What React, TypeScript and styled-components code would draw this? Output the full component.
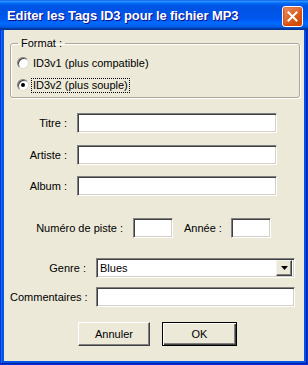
import React, { useState } from "react";
import styled, { createGlobalStyle } from "styled-components";

const GlobalStyle = createGlobalStyle`
  html, body {
    margin: 0;
    padding: 0;
    background: #ffffff;
  }
  body {
    font-family: "Liberation Sans", Arial, sans-serif;
    font-size: 11px;
    color: #000;
  }
`;

const FACE = "#ECE9D8";

const Window = styled.div`
  width: 308px;
  height: 365px;
  box-sizing: border-box;
  display: flex;
  flex-direction: column;
  background: #0054e3;
  border: 1px solid #0831d9;
  border-top: none;
  padding: 0 3px 3px 3px;
  box-shadow: inset -1px -1px #001ea0, inset 1px 0 #166aee;
`;

const TitleBar = styled.div`
  height: 30px;
  flex-shrink: 0;
  margin: 0 -4px;
  display: flex;
  align-items: center;
  justify-content: space-between;
  padding: 0 5px 0 7px;
  background: linear-gradient(
    #0058ee 0%,
    #3593ff 4%,
    #288eff 6%,
    #127dff 8%,
    #036ffc 10%,
    #0262ee 14%,
    #0057e5 20%,
    #0054e3 24%,
    #0055eb 56%,
    #005bf5 66%,
    #026afe 76%,
    #0062ef 86%,
    #0052d6 92%,
    #0040ab 94%,
    #003092 100%
  );
`;

const Title = styled.span`
  color: #fff;
  font-family: "Liberation Sans", Arial, sans-serif;
  font-weight: bold;
  font-size: 13px;
  letter-spacing: -0.1px;
  text-shadow: 1px 1px #0f1089;
  padding-top: 1px;
`;

const CloseButton = styled.button`
  width: 21px;
  height: 21px;
  padding: 0;
  margin-top: 2px;
  border: 1px solid #fff;
  border-radius: 3px;
  display: flex;
  align-items: center;
  justify-content: center;
  background: radial-gradient(
    circle at 90% 90%,
    #cc4600 0%,
    #dc6527 55%,
    #e27a4a 70%,
    #e8956e 100%
  );
  box-shadow: inset 0 -1px 2px 1px #da4600;
`;

const Body = styled.div`
  flex: 1;
  background: ${FACE};
  display: flex;
  flex-direction: column;
  padding: 7px 0 0 6px;
`;

const GroupBox = styled.fieldset`
  width: 290px;
  box-sizing: border-box;
  margin: 0;
  padding: 7px 0 5px 6px;
  border: 1px solid #aca899;
  border-radius: 3px;
  box-shadow: inset 1px 1px #fff, 1px 1px #fff;
  display: flex;
  flex-direction: column;
  gap: 8px;
`;

const Legend = styled.legend`
  padding: 0 3px;
  margin-left: 1px;
  color: #000;
`;

const RadioRow = styled.label`
  display: flex;
  align-items: center;
  gap: 3px;
  height: 14px;
`;

const RadioCircle = styled.span<{ checked: boolean }>`
  width: 12px;
  height: 12px;
  box-sizing: border-box;
  border-radius: 50%;
  border: 1px solid;
  border-color: #808080 #e0ddd0 #e0ddd0 #808080;
  background: #fff;
  box-shadow: inset 1px 1px #404040;
  display: flex;
  align-items: center;
  justify-content: center;
  &::after {
    content: "";
    width: 4px;
    height: 4px;
    border-radius: 50%;
    background: ${(p) => (p.checked ? "#000" : "transparent")};
  }
`;

const RadioText = styled.span<{ focused: boolean }>`
  padding: 0 1px;
  outline: ${(p) => (p.focused ? "1px dotted #000" : "none")};
  line-height: 13px;
`;

const Row = styled.div<{ top: number }>`
  display: flex;
  align-items: center;
  margin-top: ${(p) => p.top}px;
`;

const Label = styled.span<{ width: number }>`
  width: ${(p) => p.width}px;
  text-align: right;
  white-space: nowrap;
  margin-right: 10px;
`;

const InlineLabel = styled.span`
  margin: 0 9px 0 11px;
  white-space: nowrap;
`;

const TextBox = styled.input<{ w: number }>`
  width: ${(p) => p.w}px;
  height: 20px;
  box-sizing: border-box;
  margin: 0;
  padding: 1px 3px;
  font-family: "Liberation Sans", Arial, sans-serif;
  font-size: 11px;
  background: #fff;
  border: 1px solid;
  border-color: #808080 #ffffff #ffffff #808080;
  box-shadow: inset 1px 1px #404040, inset -1px -1px #d4d0c8;
  outline: none;
`;

const Combo = styled.div`
  width: 199px;
  height: 20px;
  box-sizing: border-box;
  display: flex;
  align-items: center;
  background: #fff;
  border: 1px solid;
  border-color: #808080 #ffffff #ffffff #808080;
  box-shadow: inset 1px 1px #404040, inset -1px -1px #d4d0c8;
  padding: 2px 2px 2px 3px;
`;

const ComboValue = styled.span`
  flex: 1;
`;

const ComboButton = styled.span`
  width: 16px;
  height: 16px;
  box-sizing: border-box;
  display: flex;
  align-items: center;
  justify-content: center;
  background: ${FACE};
  border: 1px solid;
  border-color: #f4f3ee #404040 #404040 #f4f3ee;
  box-shadow: inset -1px -1px #808080;
`;

const Buttons = styled.div`
  display: flex;
  gap: 12px;
  margin-top: 15px;
  margin-left: 68px;
`;

const PushButton = styled.button<{ primary?: boolean; w: number }>`
  width: ${(p) => p.w}px;
  height: 24px;
  box-sizing: border-box;
  font-family: "Liberation Sans", Arial, sans-serif;
  font-size: 11px;
  color: #000;
  background: ${FACE};
  padding: 0;
  border: 1px solid;
  border-color: ${(p) =>
    p.primary ? "#000" : "#ffffff #404040 #404040 #ffffff"};
  box-shadow: ${(p) =>
    p.primary
      ? "inset 1px 1px #fff, inset -1px -1px #404040, inset -2px -2px #808080"
      : "inset -1px -1px #808080"};
`;

export default function App() {
  const [version, setVersion] = useState(2);
  return (
    <>
      <GlobalStyle />
      <Window>
        <TitleBar>
          <Title>Editer les Tags ID3 pour le fichier MP3</Title>
          <CloseButton aria-label="Fermer">
            <svg width="11" height="11" viewBox="0 0 11 11">
              <path
                d="M1.5 1.5 L9.5 9.5 M9.5 1.5 L1.5 9.5"
                stroke="#fff"
                strokeWidth="2"
                strokeLinecap="square"
              />
            </svg>
          </CloseButton>
        </TitleBar>
        <Body>
          <GroupBox>
            <Legend>Format :</Legend>
            <RadioRow onClick={() => setVersion(1)}>
              <RadioCircle checked={version === 1} />
              <RadioText focused={version === 1}>
                ID3v1 (plus compatible)
              </RadioText>
            </RadioRow>
            <RadioRow onClick={() => setVersion(2)}>
              <RadioCircle checked={version === 2} />
              <RadioText focused={version === 2}>
                ID3v2 (plus souple)
              </RadioText>
            </RadioRow>
          </GroupBox>

          <Row top={15}>
            <Label width={57}>Titre :</Label>
            <TextBox w={200} />
          </Row>
          <Row top={12}>
            <Label width={57}>Artiste :</Label>
            <TextBox w={200} />
          </Row>
          <Row top={11}>
            <Label width={57}>Album :</Label>
            <TextBox w={200} />
          </Row>

          <Row top={22}>
            <Label width={113}>Numéro de piste :</Label>
            <TextBox w={40} />
            <InlineLabel>Année :</InlineLabel>
            <TextBox w={40} />
          </Row>

          <Row top={20}>
            <Label width={76}>Genre :</Label>
            <Combo>
              <ComboValue>Blues</ComboValue>
              <ComboButton>
                <svg width="7" height="4" viewBox="0 0 7 4">
                  <path d="M0 0 H7 L3.5 4 Z" fill="#000" />
                </svg>
              </ComboButton>
            </Combo>
          </Row>

          <Row top={9}>
            <Label width={76}>Commentaires :</Label>
            <TextBox w={199} />
          </Row>

          <Buttons>
            <PushButton w={72}>Annuler</PushButton>
            <PushButton w={75} primary>
              OK
            </PushButton>
          </Buttons>
        </Body>
      </Window>
    </>
  );
}
